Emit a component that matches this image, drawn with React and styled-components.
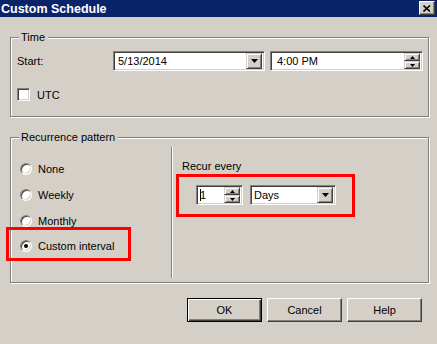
import React from 'react'
import styled, { createGlobalStyle } from 'styled-components'

const Global = createGlobalStyle`
  html, body { margin: 0; padding: 0; background: #d4d0c8; }
  * { box-sizing: border-box; }
`

const Dialog = styled.div`
  width: 437px;
  height: 344px;
  background: #d4d0c8;
  font-family: "Liberation Sans", Arial, sans-serif;
  font-size: 11px;
  color: #000;
  overflow: hidden;
`

const TitleBar = styled.div`
  height: 17px;
  background: #0a246a;
  display: flex;
  align-items: center;
  justify-content: space-between;
  padding: 0 2px 0 1px;
`

const Title = styled.span`
  color: #fff;
  font-family: "Liberation Sans", Arial, sans-serif;
  font-weight: bold;
  font-size: 12.5px;
`

const CloseBtn = styled.div`
  width: 16px;
  height: 14px;
  margin-top: -1px;
  background: #d4d0c8;
  border: 1px solid;
  border-color: #fff #404040 #404040 #fff;
  box-shadow: inset -1px -1px 0 #808080;
  display: flex;
  align-items: center;
  justify-content: center;
`

const Content = styled.div`
  padding: 20px 8px 0 10px;
`

const Group = styled.div`
  position: relative;
  border: 1px solid #808080;
  box-shadow: inset 1px 1px 0 #fff, 1px 1px 0 #fff;
  margin-top: ${p => p.$top || 0}px;
`

const Legend = styled.span`
  position: absolute;
  top: -7px;
  left: 8px;
  padding: 0 3px 0 2px;
  background: #d4d0c8;
  line-height: 13px;
`

const TimeBody = styled.div`
  padding: 13px 5px 15px 6px;
`

const Row = styled.div`
  display: flex;
  align-items: center;
  margin-top: ${p => p.$top || 0}px;
`

const FieldLabel = styled.span`
  width: 96px;
`

const Field = styled.div`
  width: ${p => p.$w}px;
  height: 20px;
  margin-left: ${p => p.$ml || 0}px;
  background: #fff;
  border: 1px solid;
  border-color: #808080 #fff #fff #808080;
  box-shadow: inset 1px 1px 0 #404040, inset -1px -1px 0 #d4d0c8;
  display: flex;
  align-items: center;
  justify-content: space-between;
  padding: 0 2px 0 ${p => p.$pl || 4}px;
`

const DropBtn = styled.div`
  width: 16px;
  height: 16px;
  background: #d4d0c8;
  border: 1px solid;
  border-color: #d4d0c8 #404040 #404040 #d4d0c8;
  box-shadow: inset 1px 1px 0 #fff, inset -1px -1px 0 #808080;
  display: flex;
  align-items: center;
  justify-content: center;
`

const Spin = styled.div`
  display: flex;
  flex-direction: column;
`

const SpinBtn = styled.div`
  width: 16px;
  height: 8px;
  background: #d4d0c8;
  border: 1px solid;
  border-color: #d4d0c8 #404040 #404040 #d4d0c8;
  box-shadow: inset 1px 1px 0 #fff, inset -1px -1px 0 #808080;
  display: flex;
  align-items: center;
  justify-content: center;
`

const Caret = styled.span`
  display: inline-block;
  width: 1px;
  height: 12px;
  background: #000;
  margin-right: -1px;
`

const Check = styled.span`
  width: 13px;
  height: 13px;
  background: #fff;
  border: 1px solid;
  border-color: #808080 #fff #fff #808080;
  box-shadow: inset 1px 1px 0 #404040, inset -1px -1px 0 #d4d0c8;
  margin-right: 7px;
`

const RecurBody = styled.div`
  display: flex;
  height: 144px;
`

const LeftPane = styled.div`
  width: 160px;
  padding: 18px 0 0 9px;
`

const RadioRow = styled.div`
  height: 26px;
  display: flex;
  align-items: center;
`

const Radio = styled.span`
  width: 12px;
  height: 12px;
  border-radius: 50%;
  background: #fff;
  border: 1px solid;
  border-color: #808080 #fff #fff #808080;
  box-shadow: inset 1px 1px 0 #404040, inset -1px -1px 0 #d4d0c8;
  margin-right: 6px;
  display: flex;
  align-items: center;
  justify-content: center;
  &::after {
    content: '';
    width: 4px;
    height: 4px;
    border-radius: 50%;
    background: ${p => (p.$on ? '#000' : 'transparent')};
  }
`

const Highlight = styled.div`
  border: 3px solid #ff0000;
  display: flex;
  align-items: center;
`

const RadioMark = styled(Highlight)`
  width: 125px;
  height: 34px;
  margin: -7px 0 0 -14px;
  padding: 4px 0 0 11px;
`

const Divider = styled.div`
  width: 1px;
  margin: 9px 0 4px;
  background: #808080;
  box-shadow: 1px 0 0 #fff;
`

const RightPane = styled.div`
  padding: 22px 0 0 10px;
  display: flex;
  flex-direction: column;
  align-items: flex-start;
`

const RecurMark = styled(Highlight)`
  margin: 2px 0 0 -6px;
  padding: 8px 16px 9px 17px;
  gap: 7px;
`

const Buttons = styled.div`
  display: flex;
  justify-content: flex-end;
  gap: 5px;
  margin-top: 15px;
  padding-right: 7px;
`

const Button = styled.div`
  width: 75px;
  height: 24px;
  display: flex;
  align-items: center;
  justify-content: center;
  background: #d4d0c8;
  border: 1px solid;
  border-color: ${p => (p.$default ? '#000' : '#fff #404040 #404040 #fff')};
  box-shadow: ${p =>
    p.$default
      ? 'inset 1px 1px 0 #fff, inset -1px -1px 0 #404040, inset -2px -2px 0 #808080'
      : 'inset -1px -1px 0 #808080'};
`

const Arrow = ({ up }) => (
  <svg width="7" height="4" viewBox="0 0 7 4">
    <path d={up ? 'M3.5 0 L7 4 L0 4 Z' : 'M0 0 L7 0 L3.5 4 Z'} fill="#000" />
  </svg>
)

const Tiny = ({ up }) => (
  <svg width="5" height="3" viewBox="0 0 5 3">
    <path d={up ? 'M2.5 0 L5 3 L0 3 Z' : 'M0 0 L5 0 L2.5 3 Z'} fill="#000" />
  </svg>
)

const Spinner = () => (
  <Spin>
    <SpinBtn><Tiny up /></SpinBtn>
    <SpinBtn><Tiny /></SpinBtn>
  </Spin>
)

const App = () => {
  const patterns = ['None', 'Weekly', 'Monthly']
  return (
    <Dialog>
      <Global />
      <TitleBar>
        <Title>Custom Schedule</Title>
        <CloseBtn>
          <svg width="8" height="7" viewBox="0 0 8 7">
            <path d="M0.5 0.5 L7 6.5 M7 0.5 L0.5 6.5" stroke="#000" strokeWidth="1.6" />
          </svg>
        </CloseBtn>
      </TitleBar>
      <Content>
        <Group>
          <Legend>Time</Legend>
          <TimeBody>
            <Row>
              <FieldLabel>Start:</FieldLabel>
              <Field $w={152}>
                <span>5/13/2014</span>
                <DropBtn><Arrow /></DropBtn>
              </Field>
              <Field $w={153} $ml={5} $pl={6}>
                <span>4:00 PM</span>
                <Spinner />
              </Field>
            </Row>
            <Row $top={17}>
              <Check />
              <span>UTC</span>
            </Row>
          </TimeBody>
        </Group>

        <Group $top={20}>
          <Legend>Recurrence pattern</Legend>
          <RecurBody>
            <LeftPane>
              {patterns.map(p => (
                <RadioRow key={p}>
                  <Radio />
                  <span>{p}</span>
                </RadioRow>
              ))}
              <RadioMark>
                <Radio $on />
                <span>Custom interval</span>
              </RadioMark>
            </LeftPane>
            <Divider />
            <RightPane>
              <span>Recur every</span>
              <RecurMark>
                <Field $w={47} $pl={3}>
                  <Caret />
                  <span style={{ flex: 1 }}>1</span>
                  <Spinner />
                </Field>
                <Field $w={86} $pl={3}>
                  <span>Days</span>
                  <DropBtn><Arrow /></DropBtn>
                </Field>
              </RecurMark>
            </RightPane>
          </RecurBody>
        </Group>

        <Buttons>
          <Button $default>OK</Button>
          <Button>Cancel</Button>
          <Button>Help</Button>
        </Buttons>
      </Content>
    </Dialog>
  )
}

export default App
